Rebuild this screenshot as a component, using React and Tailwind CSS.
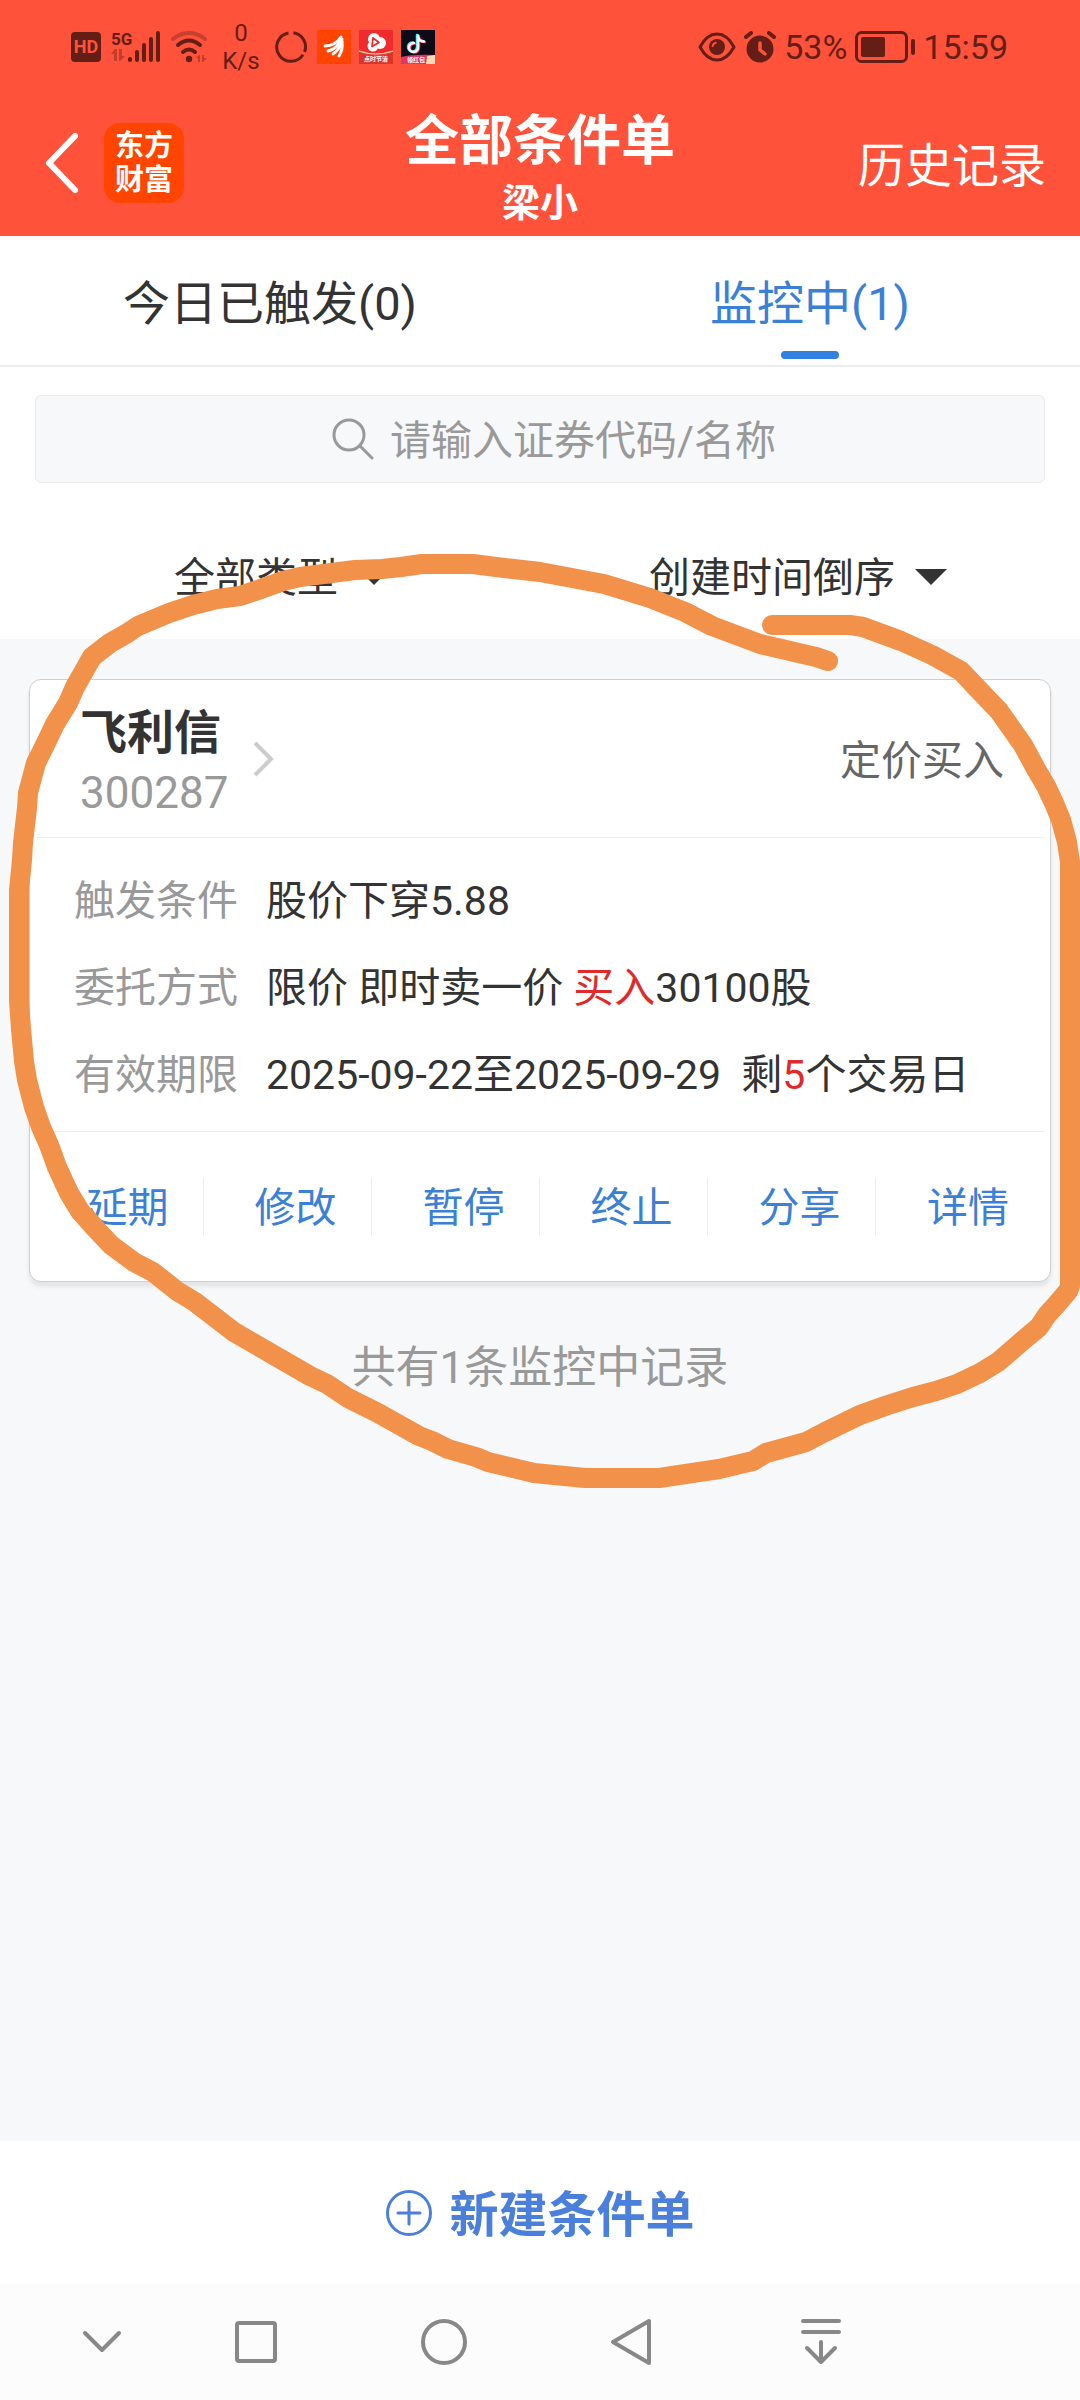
import { useState } from "react";

const TABS = [
  { id: "triggered", label: "今日已触发(0)" },
  { id: "watching", label: "监控中(1)" },
];

const ACTIONS = ["延期", "修改", "暂停", "终止", "分享", "详情"];

function StatusBar() {
  return (
    <div className="flex h-[94px] items-center justify-between pl-[71px] pr-[72px] text-[#641e16]">
      <div className="flex items-center gap-2.5">
        <div className="flex h-[30px] w-[30px] items-center justify-center rounded-[4px] bg-[#641e16] text-[18px] font-bold leading-none text-[#ff523b]">
          HD
        </div>
        <svg width="50" height="34" viewBox="0 0 50 34" fill="currentColor">
          <text x="0" y="15" fontSize="17" fontWeight="700">5G</text>
          <g opacity="0.4">
            <path d="M0 24l4-5h2v12H3v-7zM8 19v12h1l5-5h-3v-7z" />
          </g>
          <rect x="17" y="27" width="4" height="5" rx="2" />
          <rect x="24" y="20" width="4" height="12" rx="2" />
          <rect x="31" y="13" width="4" height="19" rx="2" />
          <rect x="38" y="7" width="4" height="25" rx="2" />
          <rect x="45" y="1" width="4" height="31" rx="2" />
        </svg>
        <svg width="36" height="32" viewBox="0 0 36 32" fill="none" stroke="currentColor" strokeWidth="4" strokeLinecap="round">
          <path d="M2 8q16-12 32 0" opacity="0.35" />
          <path d="M7 14q11-9 22 0" />
          <path d="M12 21q6-5 12 0" />
          <circle cx="18" cy="28" r="3.2" fill="currentColor" stroke="none" />
          <path d="M25 27l3-3h1v7h-2v-4zM31 24v7h1l4-4h-3v-3z" fill="currentColor" stroke="none" opacity="0.4" />
        </svg>
        <div className="w-12 text-center text-[24px] leading-[28px]">
          <div>0</div>
          <div>K/s</div>
        </div>
        <svg width="32" height="32" viewBox="0 0 32 32" fill="none" stroke="currentColor" strokeWidth="3">
          <path d="M18.5 1.8A14.3 14.3 0 0 1 29.6 21" />
          <path d="M28 23.8A14.3 14.3 0 1 1 13.5 1.9" />
        </svg>
        <div className="flex gap-2">
          <svg width="34" height="34" viewBox="0 0 34 34">
            <rect width="34" height="34" fill="#ff4400" />
            <g fill="none" stroke="#fff" strokeLinecap="round">
              <path d="M8 16q10 0 16-9" strokeWidth="3" />
              <path d="M11 21q9-2 14-12" strokeWidth="3" />
              <path d="M16 24q7-5 9-13" strokeWidth="3" />
              <path d="M22 26q4-6 3-14" strokeWidth="3" />
            </g>
          </svg>
          <svg width="34" height="34" viewBox="0 0 34 34">
            <rect width="34" height="34" fill="#ef2b2d" />
            <circle cx="15" cy="9" r="6" fill="#fff" />
            <circle cx="21" cy="13" r="6" fill="#fff" />
            <circle cx="14" cy="16" r="5.5" fill="#fff" />
            <path d="M14 8l6 4.5l-7 4z" fill="none" stroke="#ef2b2d" strokeWidth="1.8" strokeLinejoin="round" />
            <path d="M0 21q17 6 34 0v13H0z" fill="#d93528" />
            <path d="M0 21q17 6 34 0" fill="none" stroke="#ffd9a8" strokeWidth="1.2" />
            <text x="17" y="31" textAnchor="middle" fontSize="6" fontWeight="700" fill="#fff">点时节清</text>
          </svg>
          <svg width="34" height="34" viewBox="0 0 34 34">
            <rect width="34" height="34" fill="#0d0b18" />
            <g fill="none" strokeWidth="2.5" strokeLinecap="round">
              <path d="M16 5v12a4.500 4.500 0 1 1-4-4.500M16 6q1 5 6 5" stroke="#25f4ee" />
              <path d="M18 6v12a4.500 4.500 0 1 1-4-4.500M18 7q1 5 6 5" stroke="#fe2c55" />
              <path d="M17 5.500v12a4.500 4.500 0 1 1-4-4.500M17 6.500q1 5 6 5" stroke="#fff" />
            </g>
            <path d="M0 27q12-3 34-2v9H0z" fill="#e0355f" />
            <path d="M26 26l8-1v9h-9z" fill="#fbd9b8" />
            <text x="15" y="32" textAnchor="middle" fontSize="6" fontWeight="700" fill="#fff">领红包</text>
          </svg>
        </div>
      </div>

      <div className="flex items-center gap-2">
        <svg width="38" height="30" viewBox="0 0 38 30" fill="none" stroke="currentColor" strokeWidth="3">
          <path d="M2 15Q9 2 19 2t17 13Q29 28 19 28T2 15z" strokeLinejoin="round" />
          <circle cx="19" cy="15" r="8" fill="currentColor" stroke="none" />
          <path d="M14.500 15a5 5 0 0 1 4-4.500" stroke="#ff523b" strokeWidth="1.8" />
        </svg>
        <svg width="32" height="32" viewBox="0 0 32 32">
          <circle cx="16" cy="18" r="13.500" fill="currentColor" />
          <path d="M2 6l5-4M30 6l-5-4" stroke="currentColor" strokeWidth="4" strokeLinecap="round" />
          <path d="M16 12v7l5 4" fill="none" stroke="#ff523b" strokeWidth="3.500" strokeLinecap="round" />
        </svg>
        <span className="text-[34px] leading-none">53%</span>
        <svg width="60" height="32" viewBox="0 0 60 32">
          <rect x="1.500" y="1.500" width="50" height="29" rx="5" fill="none" stroke="currentColor" strokeWidth="3" />
          <rect x="6" y="6" width="24" height="20" rx="2" fill="currentColor" />
          <rect x="56" y="8" width="4" height="16" rx="2" fill="currentColor" />
        </svg>
        <span className="text-[34px] leading-none">15:59</span>
      </div>
    </div>
  );
}

function Header() {
  return (
    <header className="bg-[#ff523b] text-white">
      <StatusBar />
      <div className="grid h-[142px] grid-cols-[1fr_auto_1fr] items-center px-[34px] pb-2">
        <div className="flex items-center gap-6 pl-2">
          <button type="button" aria-label="返回">
            <svg width="38" height="64" viewBox="0 0 38 64" fill="none" stroke="currentColor" strokeWidth="6" strokeLinecap="round" strokeLinejoin="round">
              <path d="M33 5L7 32l26 27" />
            </svg>
          </button>
          <div className="flex h-20 w-20 items-center justify-center rounded-2xl bg-[#ff4500] text-center text-[29px] font-bold leading-[34px]">
            <div>
              东方
              <br />
              财富
            </div>
          </div>
        </div>
        <div className="pt-4 text-center font-bold">
          <h1 className="text-[54px] leading-[64px]">全部条件单</h1>
          <p className="text-[38px] leading-[58px]">梁小</p>
        </div>
        <button type="button" className="justify-self-end pt-1.5 text-[47px] leading-[60px]">
          历史记录
        </button>
      </div>
    </header>
  );
}

function Tabs({ active, onChange }) {
  return (
    <div className="grid h-[131px] grid-cols-2 border-b-2 border-[#ececec] bg-white">
      {TABS.map((t) => (
        <button
          key={t.id}
          type="button"
          onClick={() => onChange(t.id)}
          className={`relative pt-2 text-[47px] ${active === t.id ? "text-[#3a80d6]" : "text-[#333]"}`}
        >
          {t.label}
          {active === t.id && (
            <span className="absolute bottom-1.5 left-1/2 h-2 w-[58px] -translate-x-1/2 rounded-full bg-[#3280e0]" />
          )}
        </button>
      ))}
    </div>
  );
}

function SearchBox() {
  const [query, setQuery] = useState("");
  return (
    <div className="px-[35px] pt-7">
      <label className="flex h-[88px] items-center justify-center gap-4 rounded-[6px] border border-[#ebebed] bg-[#f7f8fa] pl-7">
        <svg width="42" height="42" viewBox="0 0 42 42" fill="none" stroke="#999" strokeWidth="3" strokeLinecap="round">
          <circle cx="17" cy="17" r="15" />
          <path d="M28 28l12 12" />
        </svg>
        <input
          type="text"
          aria-label="证券代码或名称"
          placeholder="请输入证券代码/名称"
          value={query}
          onChange={(e) => setQuery(e.target.value)}
          className="bg-transparent pb-1 text-[41px] leading-[60px] text-[#333] outline-none [field-sizing:content] placeholder:text-[#999]"
        />
      </label>
    </div>
  );
}

function FilterSelect({ label, options }) {
  return (
    <label className="flex items-center justify-center gap-5">
      <select
        aria-label={label}
        className="appearance-none bg-transparent pt-0.5 text-[41px] leading-[60px] text-[#333] outline-none [field-sizing:content]"
      >
        {options.map((o) => (
          <option key={o}>{o}</option>
        ))}
      </select>
      <svg width="32" height="16" viewBox="0 0 32 16" fill="#333">
        <path d="M0 0h32L16 16z" />
      </svg>
    </label>
  );
}

function OrderCard() {
  return (
    <article className="mx-[29px] mt-10 rounded-xl border border-[#cfcfcf] bg-white px-1.5 shadow-[0_5px_4px_rgba(0,0,0,0.08)]">
      <div className="flex h-[158px] items-center justify-between border-b border-[#ececec] pl-11 pr-10">
        <button type="button" className="flex items-center gap-6 text-left">
          <div className="pt-2">
            <h2 className="text-[47px] font-bold leading-[60px] text-[#333]">飞利信</h2>
            <p className="text-[44px] leading-[60px] text-[#999]">300287</p>
          </div>
          <svg width="24" height="36" viewBox="0 0 24 36" fill="none" stroke="#ccc" strokeWidth="4">
            <path d="M3 2l16 16L3 34" />
          </svg>
        </button>
        <span className="pt-1 text-[41px] leading-[60px] text-[#666]">定价买入</span>
      </div>

      <dl className="grid grid-cols-[192px_1fr] border-b border-[#ececec] pb-3 pl-[38px] pt-5 text-[41px] leading-[87px]">
        <dt className="text-[#999]">触发条件</dt>
        <dd className="text-[#333]">股价下穿5.88</dd>
        <dt className="text-[#999]">委托方式</dt>
        <dd className="text-[#333]">
          限价 即时卖一价 <span className="text-[#e02a2a]">买入</span>30100股
        </dd>
        <dt className="text-[#999]">有效期限</dt>
        <dd className="whitespace-pre text-[#333]">
          2025-09-22至2025-09-29{"  "}剩<span className="text-[#e02a2a]">5</span>个交易日
        </dd>
      </dl>

      <div className="grid h-[149px] grid-cols-6 items-center divide-x divide-[#ececec]">
        {ACTIONS.map((a) => (
          <button key={a} type="button" className="h-[58px] pl-4 text-[41px] leading-[60px] text-[#3a80d6]">
            {a}
          </button>
        ))}
      </div>
    </article>
  );
}

// freehand marker line drawn over the order card
function MarkerLine() {
  return (
    <svg className="pointer-events-none absolute left-0 top-0 h-auto w-full" viewBox="0 0 1080 2400" fill="none">
      <path
        d="M828 661L816 657L760 644L712 626L685 612L650 598L604 584L540 572L496 567L473 564L422 564L401 567L382 569L355 570L300 577L283 581L255 591L240 596L217 599L193 605L169 613L138 626L126 634L110 643L92 657L75 687L68 703L55 724L45 745L36 763L28 793L27 808L23 843L22 860L19 890L19 1001L21 1029L24 1061L27 1080L34 1107L41 1127L49 1145L57 1167L69 1193L80 1211L96 1229L111 1245L134 1262L153 1272L177 1291L195 1302L234 1332L291 1365L310 1376L327 1384L348 1398L378 1413L419 1436L432 1441L448 1449L476 1457L488 1462L534 1473L585 1478L659 1478L719 1469L753 1461L766 1453L806 1442L825 1432L860 1415L885 1406L913 1397L936 1391L957 1384L980 1373L998 1362L1020 1343L1039 1327L1047 1315L1057 1304L1068 1291L1070 1286L1070 862L1067 842L1061 820L1054 803L1046 786L1036 769L1023 745L999 711L977 688L961 671L932 655L901 641L863 627L850 625L772 625"
        stroke="#f1914a"
        strokeWidth="20"
        strokeLinecap="round"
        strokeLinejoin="round"
      />
    </svg>
  );
}

function SystemNav() {
  return (
    <nav className="grid h-[116px] grid-cols-[120fr_188fr_188fr_188fr_188fr] items-center justify-items-center bg-[#fcfcfc] pl-[42px] pr-[166px] text-[#888]">
      <button type="button" aria-label="收起">
        <svg width="48" height="48" viewBox="0 0 48 48" fill="none" stroke="currentColor" strokeWidth="4" strokeLinecap="round" strokeLinejoin="round">
          <path d="M7 15l17 17l17-17" />
        </svg>
      </button>
      <button type="button" aria-label="最近任务">
        <svg width="48" height="48" viewBox="0 0 48 48" fill="none" stroke="currentColor" strokeWidth="4">
          <rect x="5" y="5" width="38" height="38" rx="2" />
        </svg>
      </button>
      <button type="button" aria-label="主屏幕">
        <svg width="48" height="48" viewBox="0 0 48 48" fill="none" stroke="currentColor" strokeWidth="4">
          <circle cx="24" cy="24" r="21" />
        </svg>
      </button>
      <button type="button" aria-label="返回上一级">
        <svg width="48" height="48" viewBox="0 0 48 48" fill="none" stroke="currentColor" strokeWidth="4" strokeLinejoin="round">
          <path d="M41 3v42L5 24z" />
        </svg>
      </button>
      <button type="button" aria-label="下拉通知">
        <svg width="48" height="48" viewBox="0 0 48 48" fill="none" stroke="currentColor" strokeWidth="4" strokeLinecap="round" strokeLinejoin="round">
          <path d="M7 3h36M7 14h36M25 24v20M11 30l14 14l14-14" />
        </svg>
      </button>
    </nav>
  );
}

export default function App() {
  const [tab, setTab] = useState("watching");

  return (
    <div className="relative flex min-h-screen flex-col overflow-hidden bg-[#f7f8fa] font-['Roboto','Noto_Sans_CJK_SC',sans-serif]">
      <Header />
      <Tabs active={tab} onChange={setTab} />

      <section className="bg-white">
        <SearchBox />
        <div className="grid h-[156px] grid-cols-2 items-center px-6 pt-8">
          <FilterSelect label="条件单类型" options={["全部类型", "定价买入", "定价卖出"]} />
          <FilterSelect label="排序方式" options={["创建时间倒序", "创建时间正序"]} />
        </div>
      </section>

      <main className="flex-1">
        <OrderCard />
        <p className="mt-[54px] text-center text-[44px] leading-[64px] text-[#999]">共有1条监控中记录</p>
      </main>

      <footer>
        <button
          type="button"
          className="flex h-[143px] w-full items-center justify-center gap-4 bg-white text-[49px] font-bold text-[#4a7fdb]"
        >
          <svg width="48" height="48" viewBox="0 0 48 48" fill="none" stroke="currentColor" strokeWidth="3" strokeLinecap="round">
            <circle cx="24" cy="24" r="21.500" />
            <path d="M24 13v22M13 24h22" />
          </svg>
          <span className="pt-1.5">新建条件单</span>
        </button>
        <SystemNav />
      </footer>

      <MarkerLine />
    </div>
  );
}
